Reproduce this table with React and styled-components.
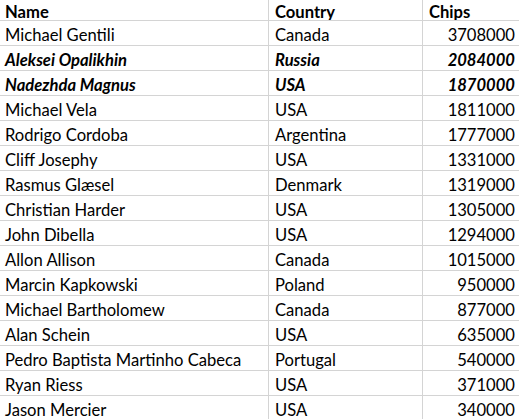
import React from "react";
import styled, { createGlobalStyle } from "styled-components";

const Global = createGlobalStyle`
  html, body { margin: 0; padding: 0; background: #ffffff; overflow: hidden; }
  body { font-family: Lato, "Open Sans", sans-serif; color: #000; }
`;

const Sheet = styled.div`
  display: grid;
  grid-template-columns: 268px 154px 97px;
  width: 519px;
  height: 419px;
  overflow: hidden;
`;

const Cell = styled.div`
  box-sizing: border-box;
  height: ${(p) => (p.$head ? "21px" : "25px")};
  line-height: ${(p) => (p.$head ? "16px" : "22px")};
  padding: ${(p) => (p.$head ? "4px" : "3px")} ${(p) => (p.$num ? "4px" : "0")} 0 ${(p) => (p.$first ? "5px" : "6px")};
  border-bottom: 1px solid #d4d4d4;
  border-left: ${(p) => (p.$first ? "none" : "1px solid #d4d4d4")};
  font-size: 16.6px;
  font-weight: ${(p) => (p.$head || p.$hl ? 700 : 400)};
  font-style: ${(p) => (p.$hl ? "italic" : "normal")};
  text-align: ${(p) => (p.$num ? "right" : "left")};
  white-space: nowrap;
  overflow: hidden;
`;

const rows = [
  ["Michael Gentili", "Canada", "3708000"],
  ["Aleksei Opalikhin", "Russia", "2084000", true],
  ["Nadezhda Magnus", "USA", "1870000", true],
  ["Michael Vela", "USA", "1811000"],
  ["Rodrigo Cordoba", "Argentina", "1777000"],
  ["Cliff Josephy", "USA", "1331000"],
  ["Rasmus Glæsel", "Denmark", "1319000"],
  ["Christian Harder", "USA", "1305000"],
  ["John Dibella", "USA", "1294000"],
  ["Allon Allison", "Canada", "1015000"],
  ["Marcin Kapkowski", "Poland", "950000"],
  ["Michael Bartholomew", "Canada", "877000"],
  ["Alan Schein", "USA", "635000"],
  ["Pedro Baptista Martinho Cabeca", "Portugal", "540000"],
  ["Ryan Riess", "USA", "371000"],
  ["Jason Mercier", "USA", "340000"],
];

export default function App() {
  return (
    <>
      <Global />
      <Sheet>
        <Cell $head $first>Name</Cell>
        <Cell $head>Country</Cell>
        <Cell $head>Chips</Cell>
        {rows.map(([n, c, v, hl]) => (
          <React.Fragment key={n}>
            <Cell $first $hl={hl}>{n}</Cell>
            <Cell $hl={hl}>{c}</Cell>
            <Cell $num $hl={hl}>{v}</Cell>
          </React.Fragment>
        ))}
      </Sheet>
    </>
  );
}
